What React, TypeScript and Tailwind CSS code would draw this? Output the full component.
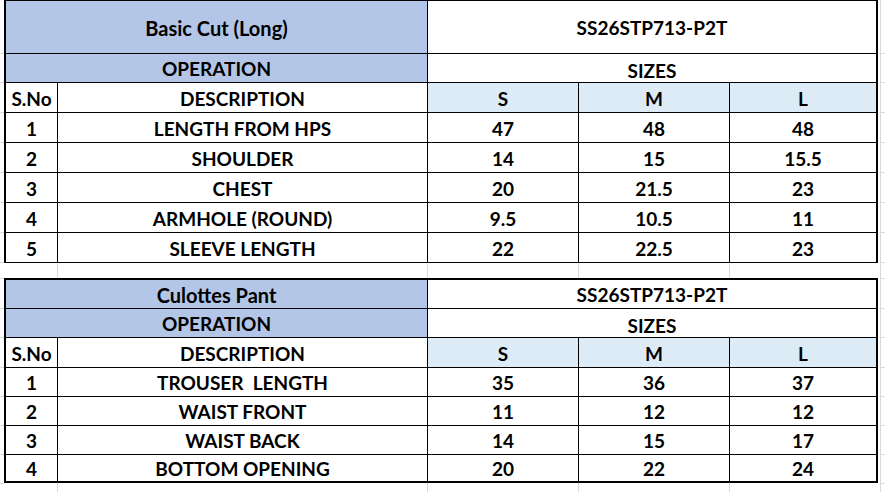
import React from "react";

type Row = [string, string, string, string, string];

const basicCut: Row[] = [
	["1", "LENGTH FROM HPS", "47", "48", "48"],
	["2", "SHOULDER", "14", "15", "15.5"],
	["3", "CHEST", "20", "21.5", "23"],
	["4", "ARMHOLE (ROUND)", "9.5", "10.5", "11"],
	["5", "SLEEVE LENGTH", "22", "22.5", "23"],
];

const culottes: Row[] = [
	["1", "TROUSER  LENGTH", "35", "36", "37"],
	["2", "WAIST FRONT", "11", "12", "12"],
	["3", "WAIST BACK", "14", "15", "17"],
	["4", "BOTTOM OPENING", "20", "22", "24"],
];

// gray excel gridlines at the sides, heights include the 1px line
const gutterRows = [54, 29, 30, 30, 30, 30, 30, 30, 16, 30, 29, 30, 29, 29, 29, 29];

const Gutter = ({ right }: { right?: boolean }) => (
	<div className={right ? "w-[7px] flex flex-col" : "w-[4px] flex flex-col"}>
		{gutterRows.map((h, i) => (
			<div
				key={i}
				style={{ height: h }}
				className={right ? "border-b border-[#d9d9d9] ml-[2px] border-l" : "border-b border-[#d9d9d9]"}
			/>
		))}
		<div className={right ? "flex-1 ml-[2px] border-l border-[#d9d9d9]" : "flex-1"} />
	</div>
);

const Cell = ({
	children,
	className = "",
}: {
	children?: React.ReactNode;
	className?: string;
}) => (
	<div className={`flex items-center justify-center ${className}`}>
		{children}
	</div>
);

const SizeTable = ({
	title,
	code,
	rows,
	first,
}: {
	title: string;
	code: string;
	rows: Row[];
	first?: boolean;
}) => {
	const rowH = first ? "h-[30px]" : "h-[29px]";
	return (
		<div
			className={
				first
					? "border-t border-x-2 border-black"
					: "border-y-2 border-x-2 border-black"
			}
		>
			<div className={`flex border-b border-black ${first ? "h-[53px]" : "h-[29px]"}`}>
				<Cell className="w-[422px] border-r border-black bg-[#b4c6e7] text-[20px] pt-[1px]">{title}</Cell>
				<Cell className="flex-1 pt-[1px]">{code}</Cell>
			</div>
			<div className="flex h-[29px] border-b border-black">
				<Cell className="w-[422px] border-r border-black bg-[#b4c6e7] pt-[1px]">OPERATION</Cell>
				<Cell className="flex-1 pt-[4px]">SIZES</Cell>
			</div>
			<div className="flex h-[30px] border-b border-black">
				<Cell className="w-[52px] border-r border-black pt-[1px]">S.No</Cell>
				<Cell className="w-[370px] border-r border-black pt-[1px]">DESCRIPTION</Cell>
				<Cell className="w-[151px] border-r border-black bg-[#ddebf7] pt-[1px]">S</Cell>
				<Cell className="w-[151px] border-r border-black bg-[#ddebf7] pt-[1px]">M</Cell>
				<Cell className="flex-1 bg-[#ddebf7] pt-[1px]">L</Cell>
			</div>
			{rows.map((r, i) => {
				const last = i === rows.length - 1;
				const h = !first && last ? "h-[26px]" : rowH;
				return (
					<div
						key={r[0]}
						className={`flex ${h} ${first || !last ? "border-b border-black" : ""}`}
					>
						<Cell className="w-[52px] border-r border-black pt-[1px]">{r[0]}</Cell>
						<Cell className="w-[370px] border-r border-black whitespace-pre pt-[1px]">{r[1]}</Cell>
						<Cell className="w-[151px] border-r border-black pt-[1px]">{r[2]}</Cell>
						<Cell className="w-[151px] border-r border-black pt-[1px]">{r[3]}</Cell>
						<Cell className="flex-1 pt-[1px]">{r[4]}</Cell>
					</div>
				);
			})}
		</div>
	);
};

const GridStrip = ({ h }: { h: string }) => (
	<div className={`flex ${h}`}>
		<div className="w-[54px] border-r border-[#d9d9d9]" />
		<div className="w-[370px] border-r border-[#d9d9d9]" />
		<div className="w-[151px] border-r border-[#d9d9d9]" />
		<div className="w-[151px] border-r border-[#d9d9d9]" />
		<div className="flex-1" />
	</div>
);

export default function App() {
	return (
		<div
			className="w-[885px] h-[492px] bg-white flex overflow-hidden text-black font-bold text-[19px] leading-none"
			style={{ fontFamily: "Lato, 'Open Sans', sans-serif" }}
		>
			<Gutter />
			<div className="w-[874px] flex flex-col">
				<SizeTable title="Basic Cut (Long)" code="SS26STP713-P2T" rows={basicCut} first />
				<GridStrip h="h-[15px]" />
				<SizeTable title="Culottes Pant" code="SS26STP713-P2T" rows={culottes} />
				<GridStrip h="flex-1" />
			</div>
			<Gutter right />
		</div>
	);
}
